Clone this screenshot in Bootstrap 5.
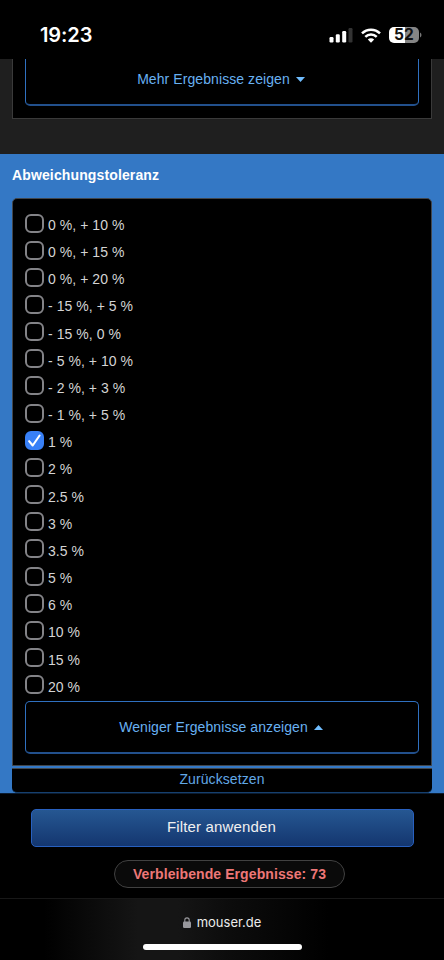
<!DOCTYPE html>
<html lang="de" data-bs-theme="dark">
<head>
<meta charset="utf-8">
<meta name="viewport" content="width=device-width, initial-scale=1">
<title>mouser.de – Filter</title>
<link href="https://cdn.jsdelivr.net/npm/bootstrap@5.3.0/dist/css/bootstrap.min.css" rel="stylesheet">
<style>
body{font:14px/20px "Liberation Sans",Arial,sans-serif;background:#000;color:#d4d4d4;height:960px;letter-spacing:.05px}
svg{display:block;flex:none}
.status-bar{height:59px;padding:11px 22px 0 40px;font-family:Inter,sans-serif;color:#fff}
.clock{font-size:20px;font-weight:600;letter-spacing:-.1px}
.battery{width:30px;height:16px;border-radius:5px;background:linear-gradient(90deg,#fff 52%,#858585 52%);color:#111;font-size:15.5px;font-weight:700;line-height:16px}
.prev-section{height:95px;padding:0 12px;background:#1f1f1f}
.prev-panel{height:60px;padding:0 12px;background:#000;border:1px solid #3a3a3a;border-top:0}
.toggle-btn{width:100%;height:53px;border:1px solid #2f70c0;border-bottom:2px solid #22508c;border-radius:5px;color:#68b1f2;background:#000;font:inherit;letter-spacing:.08px;gap:6px;padding:0 8px 0 6px}
.prev-panel .toggle-btn{height:47px;border-top:0;border-radius:0 0 5px 5px;padding-bottom:5px}
.filter-section{height:639px;padding:0 12px;background:#3478c5}
.filter-title{font-size:14px;font-weight:700;line-height:20px;padding-top:11px;height:44px;color:#fff;letter-spacing:.13px}
.filter-panel{height:568px;padding:11px 12px 0;background:#000;border:1px solid #41464c;border-radius:5px 5px 0 0}
.option{height:27.17px;gap:4px}
.form-check-input.opt-box{width:19px;height:19px;margin:3.5px 0 0;border:2px solid #838387;border-radius:6px;background-color:#000;flex:none}
.form-check-input.opt-box:checked{background-color:#3880f7;border-color:#3880f7;background-size:19px 19px;background-position:center;background-image:url("data:image/svg+xml,%3csvg xmlns='http://www.w3.org/2000/svg' viewBox='0 0 19 19'%3e%3cpath d='M4.1 10.2l3.6 4.3 6.9-10' fill='none' stroke='%23fff' stroke-width='2.1' stroke-linecap='round' stroke-linejoin='round'/%3e%3c/svg%3e")}
.option label{line-height:20px;padding-top:5px}
.filter-panel .toggle-btn{margin-top:2.5px}
.reset-link{height:25px;margin-top:2px;background:#000;border-top:1px solid #41464c;border-bottom:1px solid #16406f;border-radius:0 0 5px 5px;color:#62a8e6;line-height:21px;letter-spacing:.1px}
.actions{height:105px;padding-top:15px;background:#000;border-top:1px solid #0b1c30}
.apply-btn{width:383px;height:38px;border:1px solid #2860bf;border-radius:5px;background:linear-gradient(#265792,#14366f);color:#f0f0f0;font-size:15px;letter-spacing:.16px;padding:0 1px 1px 0}
.result-pill{width:231px;height:28px;margin:13px 0 0 15px;border:1px solid #414141;border-radius:14px;background:#0a0a0a;color:#ee7777;font-weight:700;letter-spacing:.09px}
.address-bar{height:62px;border-top:1px solid #181818;padding-top:13px;background:linear-gradient(90deg,#000 10%,#151515 31%,#151515 40%,#0c0c0c 52%,#000 74%);color:#ececec;font:13px/20px Inter,sans-serif;letter-spacing:0}
.host{gap:6px}
.home-bar{width:159px;height:6px;border-radius:3px;background:#fff;margin-top:12px}
</style>
<script src="https://cdn.jsdelivr.net/npm/bootstrap@5.3.0/dist/js/bootstrap.bundle.min.js"></script>
</head>
<body class="m-0 overflow-hidden">
<header class="status-bar d-flex align-items-center justify-content-between">
  <span class="clock">19:23</span>
  <div class="d-flex align-items-center">
    <svg width="24" height="16" viewBox="0 0 24 16"><g fill="#fff"><rect x=".5" y="10" width="4" height="5.5" rx="1.2"/><rect x="6.8" y="7.3" width="4" height="8.2" rx="1.2"/><rect x="13.2" y="4" width="4" height="11.5" rx="1.2"/></g><rect x="19.5" y="1" width="4" height="14.5" rx="1.2" fill="#333"/></svg>
    <svg class="ms-2" width="20" height="15" viewBox="0 0 20 15"><g fill="none" stroke="#fff" stroke-width="2.5"><path d="M1 5.4a12.8 12.8 0 0 1 18 0"/><path d="M4.3 8.8a8.1 8.1 0 0 1 11.4 0"/></g><path d="M10 14.7l-3.2-3.2a4.5 4.5 0 0 1 6.4 0z" fill="#fff"/></svg>
    <span class="battery ms-2 text-center">52</span>
    <svg width="3" height="6" viewBox="0 0 3 6"><path d="M1 .5v5q1.5-.7 1.5-2.5T1 .5z" fill="#777"/></svg>
  </div>
</header>
<section class="prev-section">
  <div class="prev-panel">
    <button class="toggle-btn d-flex align-items-center justify-content-center">Mehr Ergebnisse zeigen<svg width="9" height="5"><path d="M0 0h9L4.5 5z" fill="#70bdff"/></svg></button>
  </div>
</section>
<main class="filter-section">
  <h2 class="filter-title m-0">Abweichungstoleranz</h2>
  <div class="filter-panel">
    <div class="option d-flex"><input class="form-check-input opt-box" type="checkbox" id="o1"><label for="o1">0 %, + 10 %</label></div>
    <div class="option d-flex"><input class="form-check-input opt-box" type="checkbox" id="o2"><label for="o2">0 %, + 15 %</label></div>
    <div class="option d-flex"><input class="form-check-input opt-box" type="checkbox" id="o3"><label for="o3">0 %, + 20 %</label></div>
    <div class="option d-flex"><input class="form-check-input opt-box" type="checkbox" id="o4"><label for="o4">- 15 %, + 5 %</label></div>
    <div class="option d-flex"><input class="form-check-input opt-box" type="checkbox" id="o5"><label for="o5">- 15 %, 0 %</label></div>
    <div class="option d-flex"><input class="form-check-input opt-box" type="checkbox" id="o6"><label for="o6">- 5 %, + 10 %</label></div>
    <div class="option d-flex"><input class="form-check-input opt-box" type="checkbox" id="o7"><label for="o7">- 2 %, + 3 %</label></div>
    <div class="option d-flex"><input class="form-check-input opt-box" type="checkbox" id="o8"><label for="o8">- 1 %, + 5 %</label></div>
    <div class="option d-flex"><input class="form-check-input opt-box" type="checkbox" id="o9" checked><label for="o9">1 %</label></div>
    <div class="option d-flex"><input class="form-check-input opt-box" type="checkbox" id="o10"><label for="o10">2 %</label></div>
    <div class="option d-flex"><input class="form-check-input opt-box" type="checkbox" id="o11"><label for="o11">2.5 %</label></div>
    <div class="option d-flex"><input class="form-check-input opt-box" type="checkbox" id="o12"><label for="o12">3 %</label></div>
    <div class="option d-flex"><input class="form-check-input opt-box" type="checkbox" id="o13"><label for="o13">3.5 %</label></div>
    <div class="option d-flex"><input class="form-check-input opt-box" type="checkbox" id="o14"><label for="o14">5 %</label></div>
    <div class="option d-flex"><input class="form-check-input opt-box" type="checkbox" id="o15"><label for="o15">6 %</label></div>
    <div class="option d-flex"><input class="form-check-input opt-box" type="checkbox" id="o16"><label for="o16">10 %</label></div>
    <div class="option d-flex"><input class="form-check-input opt-box" type="checkbox" id="o17"><label for="o17">15 %</label></div>
    <div class="option d-flex"><input class="form-check-input opt-box" type="checkbox" id="o18"><label for="o18">20 %</label></div>
    <button class="toggle-btn d-flex align-items-center justify-content-center">Weniger Ergebnisse anzeigen<svg width="9" height="5"><path d="M0 5h9L4.5 0z" fill="#70bdff"/></svg></button>
  </div>
  <a href="#" class="reset-link d-block text-center text-decoration-none">Zurücksetzen</a>
</main>
<div class="actions d-flex flex-column align-items-center">
  <button class="apply-btn btn">Filter anwenden</button>
  <div class="result-pill d-flex align-items-center justify-content-center">Verbleibende Ergebnisse: 73</div>
</div>
<footer class="address-bar d-flex flex-column align-items-center">
  <div class="host d-flex align-items-center"><svg width="8" height="11" viewBox="0 0 8 11"><rect y="4.5" width="8" height="6.5" rx="1.2" fill="#98989d"/><path d="M1.8 5V3.1a2.2 2.2 0 0 1 4.4 0V5" fill="none" stroke="#98989d" stroke-width="1.1"/></svg>mouser.de</div>
  <div class="home-bar"></div>
</footer>
</body>
</html>
